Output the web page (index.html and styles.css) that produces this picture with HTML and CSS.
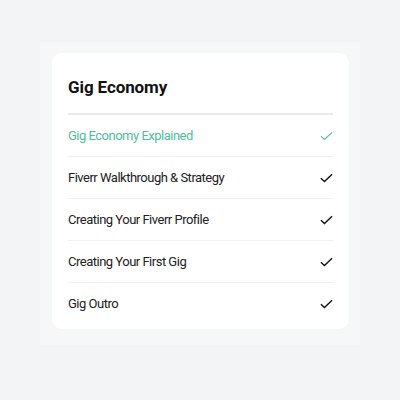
FILE: index.html
```html
<!DOCTYPE html>
<html lang="en">
<head>
  <meta charset="UTF-8">
  <meta name="viewport" content="width=device-width, initial-scale=1.0">
  <title>Gig Economy</title>
  <link rel="stylesheet" href="styles.css">
</head>
<body>
  <div class="panel">
    <div class="card">
      <h2 class="title">Gig Economy</h2>
      <ul class="lessons">
        <li class="lesson active">
          <span>Gig Economy Explained</span>
          <svg class="check" viewBox="0 0 14 10"><path d="M1 5.2l3.8 3.6L13 1"/></svg>
        </li>
        <li class="lesson">
          <span>Fiverr Walkthrough &amp; Strategy</span>
          <svg class="check" viewBox="0 0 14 10"><path d="M1 5.2l3.8 3.6L13 1"/></svg>
        </li>
        <li class="lesson">
          <span>Creating Your Fiverr Profile</span>
          <svg class="check" viewBox="0 0 14 10"><path d="M1 5.2l3.8 3.6L13 1"/></svg>
        </li>
        <li class="lesson">
          <span>Creating Your First Gig</span>
          <svg class="check" viewBox="0 0 14 10"><path d="M1 5.2l3.8 3.6L13 1"/></svg>
        </li>
        <li class="lesson">
          <span>Gig Outro</span>
          <svg class="check" viewBox="0 0 14 10"><path d="M1 5.2l3.8 3.6L13 1"/></svg>
        </li>
      </ul>
    </div>
  </div>
</body>
</html>
```

FILE: styles.css
```css
body {
  margin: 0;
  background-color: #f3f4f6;
  font-family: Roboto, "Liberation Sans", Arial, sans-serif;
}
.panel {
  width: 320px;
  height: 303px;
  margin: 42px 40px;
  padding: 11px 11px 0 12px;
  box-sizing: border-box;
  background-color: #f6f7f9;
}
.card {
  width: 297px;
  background-color: #fff;
  border-radius: 10px;
  padding: 24px 16px 5px 16px;
  box-sizing: border-box;
}
.title {
  margin: 0;
  font-size: 17px;
  line-height: 20px;
  font-weight: 700;
  letter-spacing: -0.1px;
  color: #111;
  padding-bottom: 16px;
  border-bottom: 2px solid #e8eaec;
}
.lessons {
  list-style: none;
  margin: 0;
  padding: 0;
}
.lesson {
  display: flex;
  align-items: center;
  justify-content: space-between;
  height: 41px;
  font-size: 13px;
  letter-spacing: -0.5px;
  color: #222;
  border-bottom: 1px solid #f1f2f4;
}
.lesson:last-child {
  border-bottom: none;
}
.lesson.active {
  color: #4cc09c;
}
.check {
  width: 13px;
  height: 10px;
  fill: none;
  stroke: #111;
  stroke-width: 1.5;
}
.lesson.active .check {
  stroke: #4cc09c;
  stroke-width: 1.2;
}
```
